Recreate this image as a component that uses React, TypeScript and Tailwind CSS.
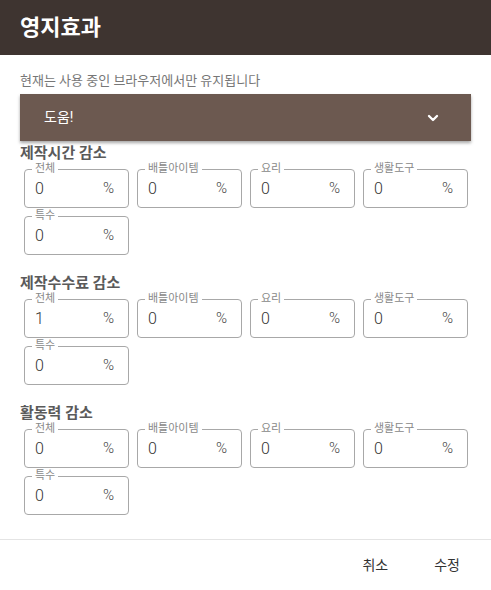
import { ChevronDown } from "lucide-react";

type Field = { label: string; value: string };

const sections: { title: string; fields: Field[] }[] = [
  {
    title: "제작시간 감소",
    fields: [
      { label: "전체", value: "0" },
      { label: "배틀아이템", value: "0" },
      { label: "요리", value: "0" },
      { label: "생활도구", value: "0" },
      { label: "특수", value: "0" },
    ],
  },
  {
    title: "제작수수료 감소",
    fields: [
      { label: "전체", value: "1" },
      { label: "배틀아이템", value: "0" },
      { label: "요리", value: "0" },
      { label: "생활도구", value: "0" },
      { label: "특수", value: "0" },
    ],
  },
  {
    title: "활동력 감소",
    fields: [
      { label: "전체", value: "0" },
      { label: "배틀아이템", value: "0" },
      { label: "요리", value: "0" },
      { label: "생활도구", value: "0" },
      { label: "특수", value: "0" },
    ],
  },
];

function PercentField({ label, value }: Field) {
  return (
    <div className="relative flex h-[39px] items-center justify-between rounded border border-[#a8a8a8] pl-[10px] pr-[14px]">
      <span className="absolute -top-[9px] left-[7px] bg-white px-[3px] text-[11px] leading-[16px] text-[#888]">
        {label}
      </span>
      <span className="text-[16px] font-light text-[#333]">{value}</span>
      <span className="text-[15px] font-light text-[#444]">%</span>
    </div>
  );
}

export default function App() {
  return (
    <div
      className="flex h-[590px] w-[491px] flex-col bg-white"
      style={{ fontFamily: 'Roboto, "Noto Sans CJK KR", sans-serif' }}
    >
      <header className="flex h-[55px] items-center bg-[#3e3430] px-5">
        <h1 className="text-[22px] font-bold text-white">영지효과</h1>
      </header>

      <div className="flex-1 px-5">
        <p className="mt-[17px] text-[13px] leading-[18px] text-[#777]">
          현재는 사용 중인 브라우저에서만 유지됩니다
        </p>

        <button className="mt-1 flex h-[47px] w-full items-center justify-between bg-[#6c5950] pl-6 pr-[30px] text-white shadow-[0_2px_3px_rgba(0,0,0,0.35)]">
          <span className="text-[14px]">도움!</span>
          <ChevronDown size={16} strokeWidth={3.5} />
        </button>

        {sections.map((s, i) => (
          <section key={s.title} className={i === 0 ? "mt-[3px]" : "mt-[19px]"}>
            <h2 className="text-[15px] font-bold leading-[18px] text-[#5a5a5a]">{s.title}</h2>
            <div className="mt-[7px] grid grid-cols-[repeat(4,105px)] gap-2 pl-1">
              {s.fields.map((f) => (
                <PercentField key={f.label} {...f} />
              ))}
            </div>
          </section>
        ))}
      </div>

      <footer className="flex h-[51px] items-center justify-end gap-[46px] border-t border-[#e4e4e4] pr-[31px] text-[14px] text-[#333]">
        <button>취소</button>
        <button>수정</button>
      </footer>
    </div>
  );
}
